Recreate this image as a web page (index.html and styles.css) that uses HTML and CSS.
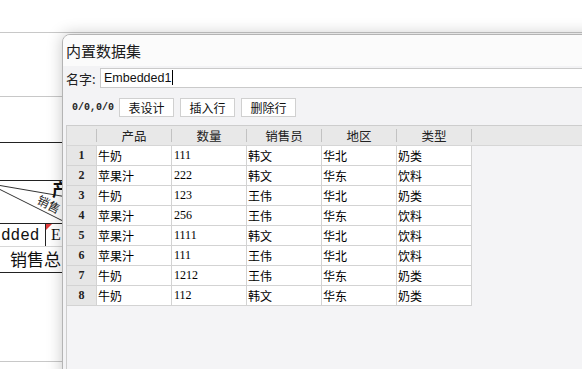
FILE: index.html
```html
<!DOCTYPE html>
<html lang="zh-CN">
<head>
    <meta charset="UTF-8">
    <meta name="viewport" content="width=device-width, initial-scale=1.0">
    <title>内置数据集</title>
    <link rel="stylesheet" href="styles.css">
</head>
<body>

    <!-- report designer canvas behind the dialog -->
    <svg class="canvas" width="582" height="369" viewBox="0 0 582 369">
        <line x1="0" y1="32.5" x2="582" y2="32.5" stroke="#c8c8c8" />
        <line x1="0" y1="96.5" x2="70" y2="96.5" stroke="#c8c8c8" />
        <line x1="0" y1="142.5" x2="70" y2="142.5" stroke="#222" />
        <line x1="0" y1="180.5" x2="70" y2="180.5" stroke="#222" />
        <line x1="0" y1="185.5" x2="70" y2="197.5" stroke="#333" />
        <line x1="0" y1="189.5" x2="70" y2="224.5" stroke="#333" />
        <text x="52" y="196" class="cv-head">产</text>
        <text x="0" y="0" class="cv-small" transform="translate(36 203) rotate(27)">销售</text>
        <line x1="0" y1="223.5" x2="70" y2="223.5" stroke="#222" />
        <line x1="45.5" y1="223" x2="45.5" y2="247" stroke="#222" />
        <line x1="0" y1="246.5" x2="70" y2="246.5" stroke="#d8d8d8" />
        <text x="1" y="240" class="cv-mono">dded</text>
        <text x="51" y="240" class="cv-serif">E</text>
        <polygon points="46,224 52,224 46,230" fill="#e23b3b" />
        <text x="10" y="266" class="cv-big">销售总</text>
        <line x1="0" y1="272.5" x2="70" y2="272.5" stroke="#222" />
        <line x1="0" y1="361.5" x2="70" y2="361.5" stroke="#c8c8c8" />
    </svg>

    <div class="dialog">
        <div class="dlg-title">内置数据集</div>
        <div class="dlg-body">
            <div class="name-row">
                <label class="name-label">名字:</label>
                <div class="name-input">Embedded1<span class="caret"></span></div>
            </div>

            <div class="toolbar">
                <span class="pos">0/0,0/0</span>
                <button class="tool-btn">表设计</button>
                <button class="tool-btn">插入行</button>
                <button class="tool-btn">删除行</button>
            </div>

            <div class="grid-wrap">
                <div class="grid-head">
                    <div class="hc hc-num"></div>
                    <div class="hc">产品</div>
                    <div class="hc">数量</div>
                    <div class="hc">销售员</div>
                    <div class="hc">地区</div>
                    <div class="hc">类型</div>
                </div>
                <div id="grid-body"></div>
            </div>
        </div>
    </div>

    <script>
        // Embedded data rows
        const rows = [
            ['牛奶', '111', '韩文', '华北', '奶类'],
            ['苹果汁', '222', '韩文', '华东', '饮料'],
            ['牛奶', '123', '王伟', '华北', '奶类'],
            ['苹果汁', '256', '王伟', '华东', '饮料'],
            ['苹果汁', '1111', '韩文', '华北', '饮料'],
            ['苹果汁', '111', '王伟', '华北', '饮料'],
            ['牛奶', '1212', '王伟', '华东', '奶类'],
            ['牛奶', '112', '韩文', '华东', '奶类']
        ];

        const body = document.getElementById('grid-body');
        rows.forEach((row, index) => {
            let line = document.createElement('div');
            line.className = 'grid-row';
            line.innerHTML = `
                <div class="rn">${index + 1}</div>
                <div class="c">${row[0]}</div>
                <div class="c c-num">${row[1]}</div>
                <div class="c">${row[2]}</div>
                <div class="c">${row[3]}</div>
                <div class="c">${row[4]}</div>
            `;
            body.appendChild(line);
        });
    </script>

</body>
</html>
```

FILE: styles.css
```css
html, body {
    margin: 0;
    padding: 0;
}

body {
    width: 582px;
    height: 369px;
    overflow: hidden;
    position: relative;
    background-color: #fff;
    font-family: "Liberation Sans", "Noto Sans CJK SC", sans-serif;
    color: #111;
}

.canvas {
    display: block;
}

.cv-head {
    font-family: "Noto Sans CJK SC", sans-serif;
    font-size: 17px;
    font-weight: bold;
    fill: #111;
}

.cv-small {
    font-family: "Noto Sans CJK SC", sans-serif;
    font-size: 12px;
    fill: #222;
}

.cv-mono {
    font-family: "Liberation Mono", monospace;
    font-size: 16px;
    fill: #111;
}

.cv-serif {
    font-family: "Liberation Serif", serif;
    font-size: 16px;
    fill: #111;
}

.cv-big {
    font-family: "Noto Sans CJK SC", sans-serif;
    font-size: 17px;
    fill: #111;
}

/* dialog window */
.dialog {
    position: absolute;
    left: 62px;
    top: 34px;
    width: 540px;
    height: 350px;
    border: 1px solid #b4b4b4;
    border-radius: 8px 0 0 0;
    background-color: #f3f3f5;
    box-shadow: 0 0 16px rgba(0, 0, 0, 0.22);
    overflow: hidden;
}

.dlg-title {
    height: 31px;
    line-height: 31px;
    padding-left: 3px;
    background-color: #fbfbfb;
    font-family: "Noto Sans CJK SC", sans-serif;
    font-size: 15px;
    color: #1a1a1a;
}

.dlg-body {
    padding: 2px 0 0 3px;
}

.name-row {
    display: flex;
    align-items: center;
    height: 20px;
}

.name-label {
    width: 34px;
    font-family: "Noto Sans CJK SC", sans-serif;
    font-size: 13px;
    color: #222;
}

.name-input {
    flex: 1;
    height: 20px;
    box-sizing: border-box;
    border: 1px solid #cacaca;
    border-right: none;
    background-color: #fff;
    padding-left: 3px;
    font-size: 12.5px;
    line-height: 18px;
    color: #111;
}

.caret {
    display: inline-block;
    width: 1px;
    height: 15px;
    margin-left: 1px;
    background-color: #000;
    vertical-align: -3px;
}

.toolbar {
    display: flex;
    align-items: center;
    height: 19px;
    margin-top: 10px;
    gap: 6px;
}

.pos {
    width: 42px;
    margin-left: 6px;
    margin-right: -1px;
    font-family: "Liberation Mono", monospace;
    font-size: 10px;
    font-weight: bold;
    color: #222;
}

.tool-btn {
    width: 55px;
    height: 19px;
    padding: 0;
    border: 1px solid #d0d0d0;
    background-color: #fff;
    font-family: "Noto Sans CJK SC", sans-serif;
    font-size: 12px;
    color: #111;
}

/* data grid */
.grid-wrap {
    margin-top: 8px;
    height: 300px;
    border-top: 1px solid #cdcdcd;
    border-left: 1px solid #cdcdcd;
    background-color: #f4f4f6;
}

.grid-head {
    display: flex;
    height: 20px;
    box-sizing: border-box;
    border-bottom: 1px solid #d6d6d6;
    background-color: #e8e8e8;
}

.hc {
    width: 75px;
    height: 13px;
    margin: 3px 0;
    box-sizing: border-box;
    border-right: 1px solid #c2c2c2;
    text-align: center;
    font-family: "Noto Sans CJK SC", sans-serif;
    font-size: 12.5px;
    line-height: 13px;
    color: #222;
}

.hc-num {
    width: 30px;
}

.grid-row {
    display: flex;
    height: 20px;
}

.rn, .c {
    height: 20px;
    box-sizing: border-box;
    border-right: 1px solid #d3d3d3;
    border-bottom: 1px solid #d3d3d3;
    line-height: 19px;
}

.rn {
    width: 30px;
    background-color: #e6e6e6;
    text-align: center;
    font-family: "Liberation Serif", serif;
    font-size: 12px;
    font-weight: bold;
    color: #222;
}

.c {
    width: 75px;
    padding-left: 1px;
    background-color: #fff;
    font-family: "Noto Sans CJK SC", sans-serif;
    font-size: 12px;
    color: #000;
}

.c-num {
    padding-left: 2px;
    font-family: "Liberation Serif", serif;
}
```
